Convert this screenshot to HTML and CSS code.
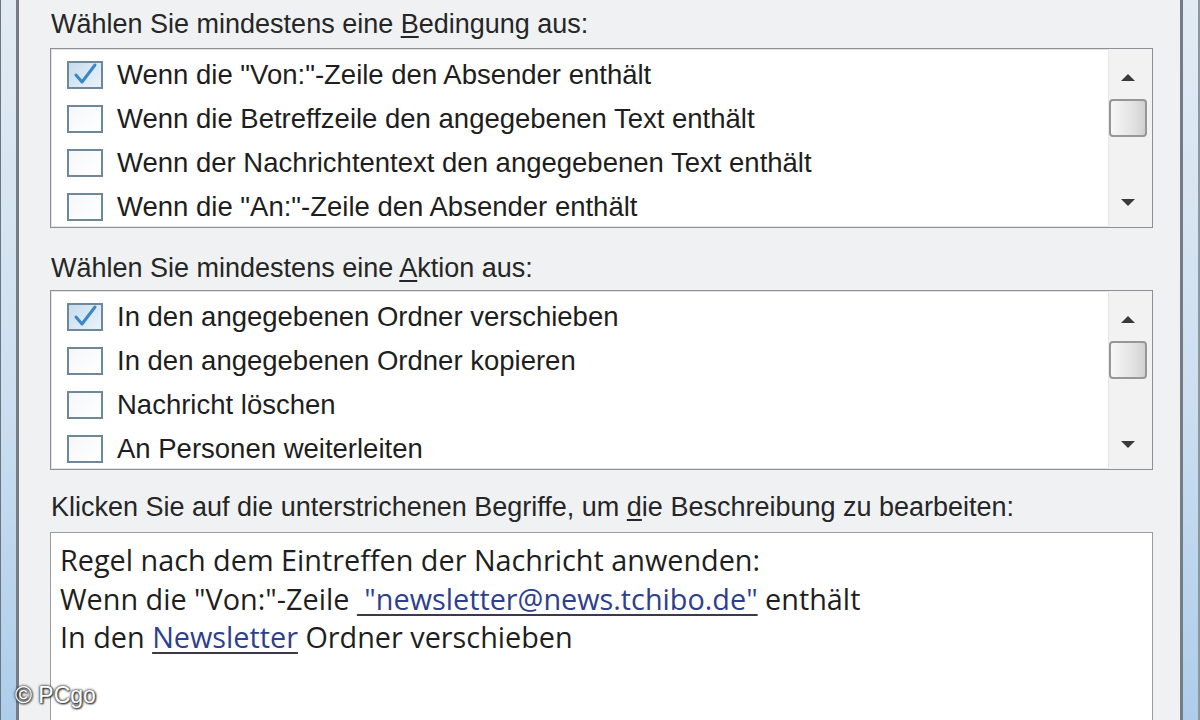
FILE: index.html
```html
<!DOCTYPE html>
<html lang="de">
<head>
<meta charset="utf-8">
<title>Regel</title>
<link rel="stylesheet" href="styles.css">
</head>
<body>
<div class="frame frame-left"></div>
<main class="dialog">
  <div class="label first">Wählen Sie mindestens eine <u>B</u>edingung aus:</div>
  <div class="listbox">
    <ul class="items">
      <li><span class="cb checked"><svg viewBox="0 0 36 28" width="36" height="28"><path d="M9 14 L15 21 L28 4" fill="none" stroke="#3b87c4" stroke-width="3" stroke-linecap="round" stroke-linejoin="round"/></svg></span>Wenn die "Von:"-Zeile den Absender enthält</li>
      <li><span class="cb"></span>Wenn die Betreffzeile den angegebenen Text enthält</li>
      <li><span class="cb"></span>Wenn der Nachrichtentext den angegebenen Text enthält</li>
      <li><span class="cb"></span>Wenn die "An:"-Zeile den Absender enthält</li>
    </ul>
    <div class="scrollbar">
      <span class="arrow up"></span>
      <span class="thumb"></span>
      <span class="spacer"></span>
      <span class="arrow down"></span>
    </div>
  </div>
  <div class="label second">Wählen Sie mindestens eine <u>A</u>ktion aus:</div>
  <div class="listbox">
    <ul class="items">
      <li><span class="cb checked"><svg viewBox="0 0 36 28" width="36" height="28"><path d="M9 14 L15 21 L28 4" fill="none" stroke="#3b87c4" stroke-width="3" stroke-linecap="round" stroke-linejoin="round"/></svg></span>In den angegebenen Ordner verschieben</li>
      <li><span class="cb"></span>In den angegebenen Ordner kopieren</li>
      <li><span class="cb"></span>Nachricht löschen</li>
      <li><span class="cb"></span>An Personen weiterleiten</li>
    </ul>
    <div class="scrollbar">
      <span class="arrow up"></span>
      <span class="thumb"></span>
      <span class="spacer"></span>
      <span class="arrow down"></span>
    </div>
  </div>
  <div class="label third">Klicken Sie auf die unterstrichenen Begriffe, um <u>d</u>ie Beschreibung zu bearbeiten:</div>
  <div class="description">
    <p>Regel nach dem Eintreffen der Nachricht anwenden:</p>
    <p>Wenn die "Von:"-Zeile <a class="link">&nbsp;"newsletter@news.tchibo.de"</a> enthält</p>
    <p>In den <a class="link">Newsletter</a> Ordner verschieben</p>
  </div>
  <div class="watermark">© PCgo</div>
</main>
<div class="frame frame-right"></div>
</body>
</html>
```

FILE: styles.css
```css
html, body {
  margin: 0;
  padding: 0;
  width: 1200px;
  height: 720px;
  overflow: hidden;
}
body {
  display: flex;
  background: #f0f1f2;
  font-family: "Liberation Sans", Arial, sans-serif;
  color: #1c1c1c;
}
.frame {
  flex: none;
  background: linear-gradient(#e2ebf3, #cddff0 55%, #aecdea);
}
.frame-left {
  width: 15px;
  border-left: 1px solid #6c7680;
  border-right: 3px solid #747c84;
}
.frame-right {
  width: 15px;
  border-left: 3px solid #747c84;
  border-right: 2px solid #8a96a2;
}
.dialog {
  flex: 1;
  position: relative;
  display: flex;
  flex-direction: column;
  padding: 0 27px 0 31px;
  background: #eff1f3;
}
.label {
  font-size: 27px;
  line-height: 32px;
  padding-left: 1px;
  color: #262626;
}
.label u { text-decoration-thickness: 2px; text-underline-offset: 3px; }
.label.first { margin-top: 8px; margin-bottom: 8px; }
.label.second { margin-top: 24px; margin-bottom: 6px; }
.label.third { margin-top: 21px; margin-bottom: 9px; }
.listbox {
  height: 178px;
  border: 1px solid #8d9095;
  box-shadow: inset 0 0 0 1px #e2e4e6;
  background: #fff;
  display: flex;
}
.items {
  flex: 1;
  list-style: none;
  margin: 0;
  padding: 4px 0 0 16px;
}
.items li {
  height: 44px;
  display: flex;
  align-items: center;
  font-size: 27.5px;
  color: #1e1e1e;
  white-space: nowrap;
}
.cb {
  flex: none;
  box-sizing: border-box;
  width: 36px;
  height: 28px;
  border: 2px solid #6e8799;
  background: linear-gradient(135deg, #f4f7f9, #ffffff);
  margin-right: 14px;
  display: flex;
}
.cb.checked {
  background: linear-gradient(135deg, #c6dcee, #eaf3fa);
}
.cb svg { margin: -2px; }
.scrollbar {
  flex: none;
  box-sizing: border-box;
  width: 44px;
  padding-right: 6px;
  background: #f2f2f2;
  border-left: 1px solid #e8e8e8;
  display: flex;
  flex-direction: column;
  align-items: center;
}
.arrow {
  width: 0;
  height: 0;
  border-left: 7px solid transparent;
  border-right: 7px solid transparent;
}
.arrow.up {
  margin-top: 25px;
  border-bottom: 7px solid #3a3a3a;
}
.arrow.down {
  margin-bottom: 21px;
  border-top: 7px solid #3a3a3a;
}
.thumb {
  margin-top: 18px;
  box-sizing: border-box;
  width: 38px;
  height: 38px;
  border: 2px solid #979797;
  border-radius: 4px;
  background: linear-gradient(90deg, #f7f7f7, #e0e0e0 70%, #d0d0d0);
}
.spacer { flex: 1; }
.description {
  flex: 1;
  border: 1px solid #9a9ca0;
  border-bottom: none;
  background: #fff;
  padding: 8px 0 0 9px;
  font-family: "Open Sans", "Noto Sans", sans-serif;
  font-size: 28.8px;
  color: #1e1e1e;
}
.description p {
  margin: 0;
  line-height: 38.5px;
  white-space: nowrap;
}
.link {
  color: #2e3f8e;
  text-decoration: underline;
  text-decoration-color: #3a3a4a;
  text-decoration-thickness: 2px;
  text-underline-offset: 4px;
}
.watermark {
  position: absolute;
  left: -4px;
  bottom: 11px;
  font-family: "Liberation Sans", Arial, sans-serif;
  font-size: 23px;
  color: #fff;
  text-shadow: 0 0 2px #333, 0 0 3px #333, 1px 1px 2px #222;
}
```
